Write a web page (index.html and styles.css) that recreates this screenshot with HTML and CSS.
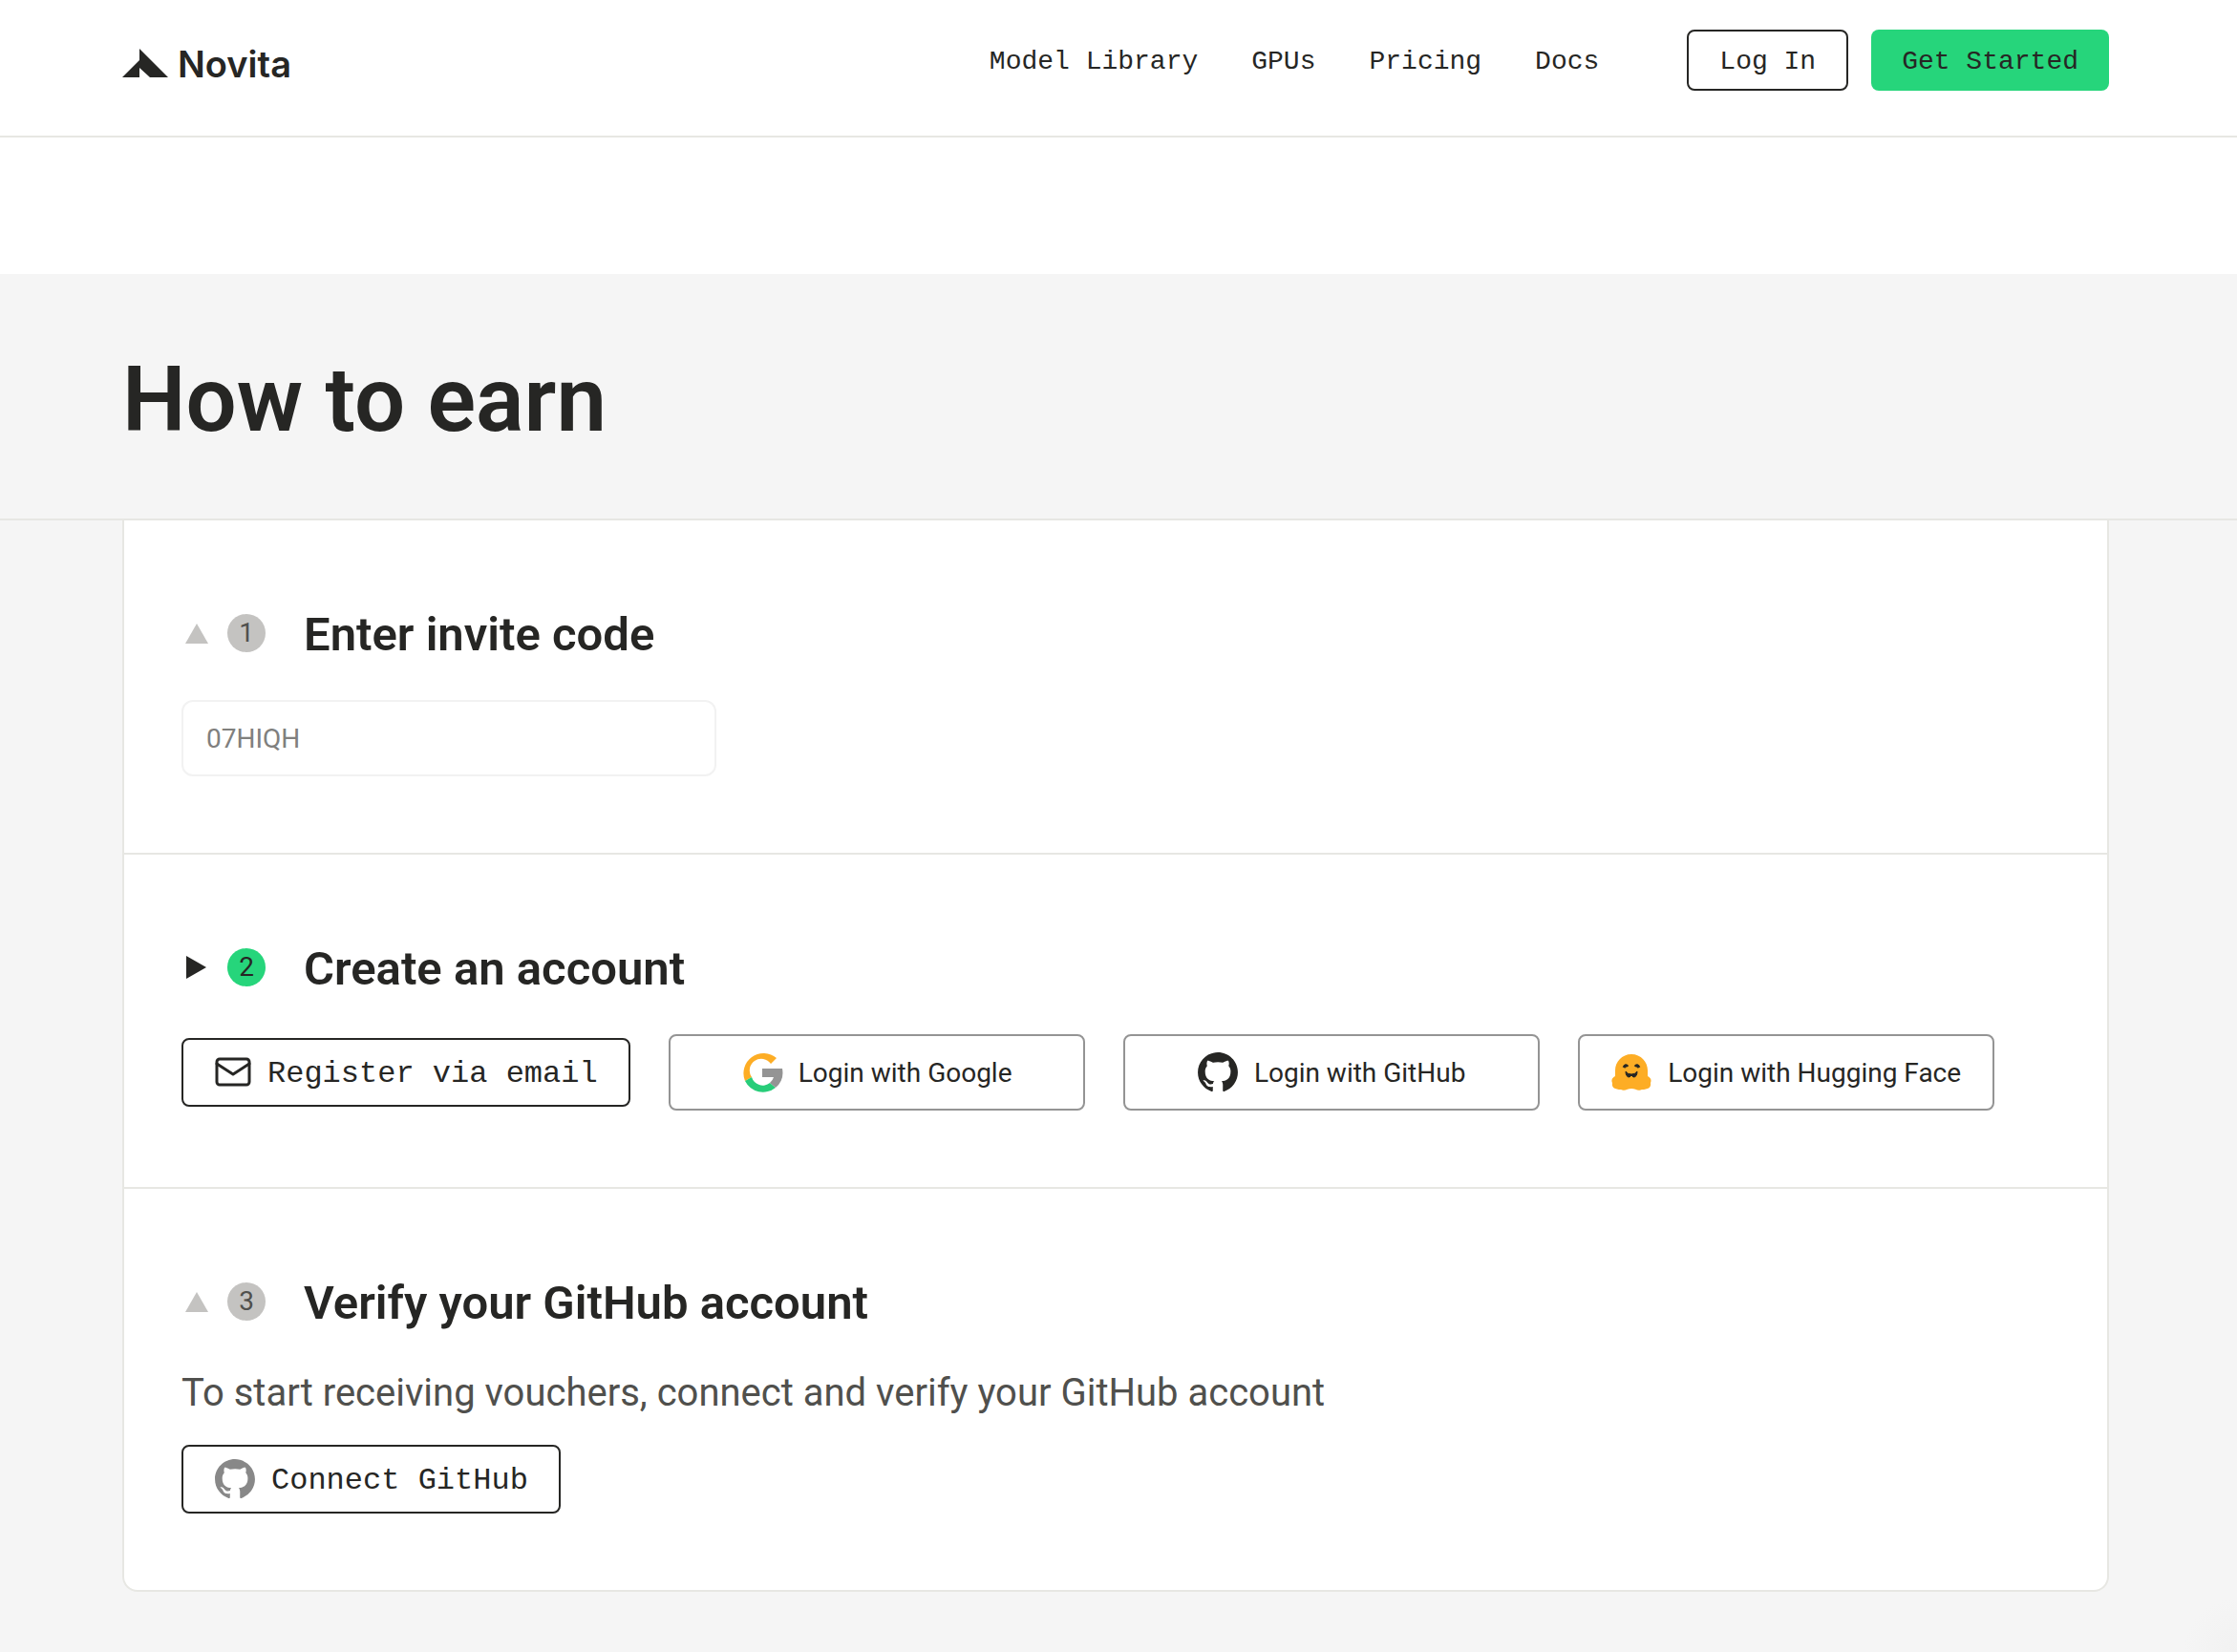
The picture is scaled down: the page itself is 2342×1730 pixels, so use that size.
FILE: index.html
```html
<!DOCTYPE html>
<html lang="en">
<head>
<meta charset="utf-8">
<meta name="viewport" content="width=device-width, initial-scale=1">
<title>Novita – How to earn</title>
<link rel="stylesheet" href="styles.css">
</head>
<body>
<svg class="sprite" aria-hidden="true">
  <symbol id="github" viewBox="-.4 -.4 16.8 16.8">
    <path fill="currentColor" d="M8 0C3.58 0 0 3.58 0 8c0 3.54 2.29 6.53 5.47 7.59.4.07.55-.17.55-.38 0-.19-.01-.82-.01-1.49-2.01.37-2.53-.49-2.69-.94-.09-.23-.48-.94-.82-1.13-.28-.15-.68-.52-.01-.53.63-.01 1.08.58 1.23.82.72 1.21 1.87.87 2.33.66.07-.52.28-.87.51-1.07-1.78-.2-3.64-.89-3.64-3.95 0-.87.31-1.59.82-2.15-.08-.2-.36-1.02.08-2.12 0 0 .67-.21 2.2.82.64-.18 1.32-.27 2-.27.68 0 1.36.09 2 .27 1.53-1.04 2.2-.82 2.2-.82.44 1.1.16 1.92.08 2.12.51.56.82 1.27.82 2.15 0 3.07-1.87 3.75-3.65 3.95.29.25.54.73.54 1.48 0 1.07-.01 1.93-.01 2.2 0 .21.15.46.55.38A8.013 8.013 0 0016 8c0-4.42-3.58-8-8-8z"/>
  </symbol>
</svg>

<header class="site-header">
  <a class="logo" href="#">
    <svg class="logo-mark" viewBox="0 0 48 30" aria-hidden="true"><path d="M18 0L48 30H29L18 20V30H0L18 12Z" fill="#262624"/></svg>
    <span>Novita</span>
  </a>
  <nav class="main-nav" aria-label="Main">
    <a href="#">Model Library</a>
    <a href="#">GPUs</a>
    <a href="#">Pricing</a>
    <a href="#">Docs</a>
  </nav>
  <div class="header-actions">
    <button type="button" class="btn btn-outline"><span>Log In</span></button>
    <button type="button" class="btn btn-primary"><span>Get Started</span></button>
  </div>
</header>

<main class="page">
  <div class="hero">
    <h1>How to earn</h1>
  </div>

  <div class="steps-wrap">
    <div class="steps">
      <section class="step">
        <div class="step-head">
          <svg class="marker" viewBox="0 0 28 28" aria-hidden="true"><path d="M14 4L26 25H2Z" fill="#c4c3c1"/></svg>
          <span class="badge">1</span>
          <h2><label for="invite">Enter invite code</label></h2>
        </div>
        <input class="code" id="invite" type="text" value="07HIQH">
      </section>

      <section class="step">
        <div class="step-head">
          <svg class="marker" viewBox="0 0 28 28" aria-hidden="true"><path d="M3 2L24 14L3 26Z" fill="#262624"/></svg>
          <span class="badge badge-active">2</span>
          <h2>Create an account</h2>
        </div>
        <div class="options">
          <button type="button" class="btn btn-large">
            <svg class="icon-mail" viewBox="0 0 40 40" fill="none" stroke="#262624" stroke-width="3" stroke-linejoin="round" stroke-linecap="round" aria-hidden="true"><rect x="3" y="6" width="34" height="27" rx="3"/><path d="M3 11L20 22L37 11"/></svg>
            <span>Register via email</span>
          </button>
          <button type="button" class="provider">
            <svg class="icon" viewBox="-1 -1 44 44" aria-hidden="true">
              <path fill="#fdad25" d="M36 6L30 12A12 12 0 0 0 10 26L3 30A21 21 0 0 1 36 6Z"/>
              <path fill="#27cd79" d="M3 30L10 26A12 12 0 0 0 29 32L35 37A21 21 0 0 1 3 30Z"/>
              <path fill="#949494" d="M21 17H42A21 21 0 0 1 35 37L29 32A12 12 0 0 0 33 26H21Z"/>
            </svg>
            Login with Google
          </button>
          <button type="button" class="provider">
            <svg class="icon" aria-hidden="true"><use href="#github"/></svg>
            Login with GitHub
          </button>
          <button type="button" class="provider">
            <svg class="icon" viewBox="-1 -1 44 44" aria-hidden="true">
              <path fill="#fdad25" d="M21 2C31 2 38 10 38 19V25C42 27 42 30 41 32C42 37 38 39 32 39C28 41 25 38 21 38C17 38 14 41 10 39C4 39 0 37 1 32C0 30 0 27 4 25V19C4 10 11 2 21 2Z"/>
              <path d="M13 16Q15 12 17 15M25 15Q27 12 29 16" fill="none" stroke="#262624" stroke-width="3"/>
              <path d="M15 20Q17 23 21 23Q25 23 27 20Q27 26 23 26L21 24L19 26Q15 26 15 20Z" fill="#262624" stroke="#262624"/>
            </svg>
            Login with Hugging Face
          </button>
        </div>
      </section>

      <section class="step">
        <div class="step-head">
          <svg class="marker" viewBox="0 0 28 28" aria-hidden="true"><path d="M14 4L26 25H2Z" fill="#c4c3c1"/></svg>
          <span class="badge">3</span>
          <h2>Verify your GitHub account</h2>
        </div>
        <p class="note">To start receiving vouchers, connect and verify your GitHub account</p>
        <button type="button" class="btn btn-large">
          <svg class="icon icon-muted" aria-hidden="true"><use href="#github"/></svg>
          <span>Connect GitHub</span>
        </button>
      </section>
    </div>
  </div>
</main>
</body>
</html>
```

FILE: styles.css
```css
:root {
  --ink: #262624;
  --line: #e7e7e3;
  --surface: #f5f5f5;
  --green: #26d57b;
  --sans: Roboto, "Liberation Sans", sans-serif;
  --mono: "Liberation Mono", monospace;
  --gutter-left: 128px;
  --gutter-right: 134px;
}

* { box-sizing: border-box; }

body {
  margin: 0;
  min-height: 100vh;
  display: flex;
  flex-direction: column;
  background: #fff;
  color: var(--ink);
  font-family: var(--sans);
}

button, input { font: inherit; color: inherit; margin: 0; }
button { cursor: pointer; }
a { color: inherit; text-decoration: none; }
h1, h2, p { margin: 0; }
svg { display: block; flex: none; }
.sprite { display: none; }

.site-header {
  display: flex;
  align-items: center;
  padding: 31px var(--gutter-right) 47px var(--gutter-left);
  border-bottom: 2px solid var(--line);
}

.logo {
  display: flex;
  align-items: baseline;
  gap: 10px;
  margin-right: auto;
  padding-top: 8px;
  font: 600 38px/48px Inter, var(--sans);
}
.logo-mark { width: 48px; height: 30px; }

.main-nav {
  display: flex;
  gap: 56px;
  margin-right: 92px;
  padding-top: 4px;
  font: 28px/40px var(--mono);
}

.header-actions { display: flex; gap: 24px; }

.btn {
  display: flex;
  align-items: center;
  justify-content: center;
  gap: 16px;
  height: 64px;
  padding: 0 32px;
  border: 0;
  border-radius: 8px;
  background: #fff;
  font: 28px/40px var(--mono);
  white-space: nowrap;
}
.btn span { padding-top: 4px; }
.btn-outline, .btn-large { border: 2px solid var(--ink); }
.btn-primary { background: var(--green); }
.btn-large { height: 72px; font-size: 32px; }

.page {
  flex: 1;
  display: flex;
  flex-direction: column;
  padding-top: 143px;
}

.hero {
  padding: 76px var(--gutter-right) 68px var(--gutter-left);
  background: var(--surface);
  border-bottom: 2px solid var(--line);
}
h1 { font-size: 94px; line-height: 112px; font-weight: 600; }

.steps-wrap {
  flex: 1;
  padding: 0 var(--gutter-right) 63px var(--gutter-left);
  background: radial-gradient(circle at right bottom, #f1f1f1, var(--surface) 56px);
}
.steps {
  background: #fff;
  border: 2px solid var(--line);
  border-top: 0;
  border-radius: 0 0 16px 16px;
}

.step {
  display: flex;
  flex-direction: column;
  align-items: flex-start;
  gap: 32px;
  padding: 80px 60px;
}
.step + .step { border-top: 2px solid var(--line); }

.step-head { display: flex; align-items: center; height: 76px; }
.marker { width: 28px; height: 28px; margin: 0 18px 0 2px; }
.badge {
  width: 40px;
  height: 40px;
  margin-right: 40px;
  border-radius: 50%;
  background: #c4c3c1;
  color: #50504d;
  font-size: 28px;
  line-height: 40px;
  text-align: center;
}
.badge-active { background: var(--green); color: var(--ink); }
h2 { padding-top: 4px; font-size: 49px; line-height: 64px; font-weight: 600; }

.code {
  width: 560px;
  height: 80px;
  padding: 0 24px;
  border: 2px solid #f2f2f2;
  border-radius: 12px;
  background: #fff;
  color: #80807e;
  font-size: 28px;
}

.options { display: flex; flex-wrap: wrap; align-items: center; gap: 40px; }

.provider {
  display: flex;
  align-items: center;
  justify-content: center;
  gap: 16px;
  width: 436px;
  height: 80px;
  padding: 0;
  border: 2px solid #949494;
  border-radius: 8px;
  background: #fff;
  font-size: 28px;
  white-space: nowrap;
}
.icon { width: 44px; height: 44px; }
.icon-mail { width: 40px; height: 40px; }
.icon-muted { color: #888; }

.note { padding-top: 4px; font-size: 40px; line-height: 44px; color: #50504d; }
```
